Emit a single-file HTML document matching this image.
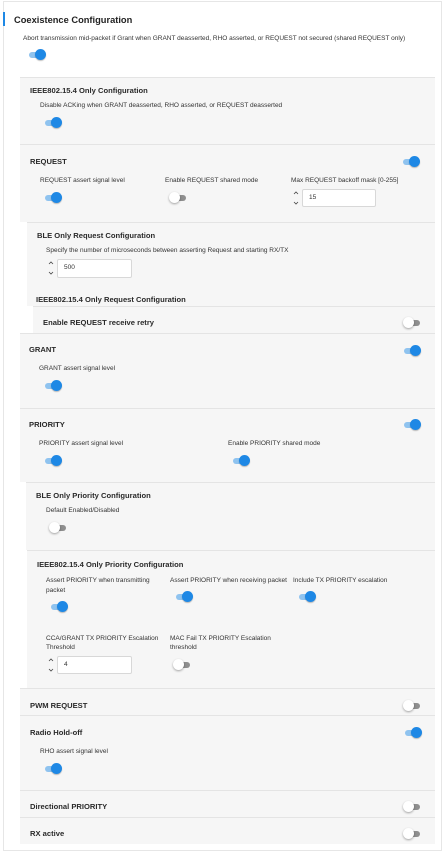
<!DOCTYPE html>
<html><head><meta charset="utf-8"><style>
*{margin:0;padding:0;box-sizing:border-box}
body{width:448px;height:848px;background:#fff;font-family:"Liberation Sans",Arial,sans-serif;color:#222;position:relative;overflow:hidden}
.a{position:absolute}
.card{left:3px;top:1px;width:439px;height:850px;border:1px solid #e6e6e6;background:#fff}
.p{background:#f6f6f6;border-top:1px solid #e4e4e4}
.t{position:absolute;white-space:nowrap;line-height:10px}
.h{font-size:7.6px;font-weight:bold;color:#2a2a2a}
.l{font-size:6.5px;color:#333}
.on,.off{position:absolute;width:18px;height:12px}
.on::before{content:"";position:absolute;left:1px;top:3px;width:15px;height:6px;border-radius:3px;background:#8fc3ef}
.on::after{content:"";position:absolute;left:7px;top:0;width:11px;height:11px;border-radius:50%;background:#1e88e5;box-shadow:0 1px 1px rgba(0,0,0,.25)}
.off::before{content:"";position:absolute;left:3px;top:3px;width:14px;height:6px;border-radius:3px;background:#8f8f8f}
.off::after{content:"";position:absolute;left:0;top:0;width:11px;height:11px;border-radius:50%;background:#fff;box-shadow:0 1px 2px rgba(0,0,0,.35)}
.in{position:absolute;background:#fff;border:1px solid #d8d8d8;border-radius:2px;font-size:6.5px;line-height:16px;padding-left:6px;color:#333}
.ar{position:absolute;width:6px;height:18px}
</style></head><body>
<div class="a card"></div>
<div class="a" style="left:3px;top:12px;width:2px;height:14px;background:#1e88e5"></div>
<div class="t" style="left:14px;top:15px;font-size:9.3px;font-weight:bold;color:#222">Coexistence Configuration</div>
<div class="t l" style="left:23px;top:34px">Abort transmission mid-packet if Grant when GRANT deasserted, RHO asserted, or REQUEST not secured (shared REQUEST only)</div>
<div class="on" style="left:28px;top:49px"></div>

<div class="a p" style="left:20px;top:77px;width:415px;height:67px"></div>
<div class="t h" style="left:30px;top:86px">IEEE802.15.4 Only Configuration</div>
<div class="t l" style="left:40px;top:101px">Disable ACKing when GRANT deasserted, RHO asserted, or REQUEST deasserted</div>
<div class="on" style="left:44px;top:117px"></div>

<div class="a p" style="left:20px;top:144px;width:415px;height:78px"></div>
<div class="t h" style="left:30px;top:157px">REQUEST</div>
<div class="on" style="left:402px;top:156px"></div>
<div class="t l" style="left:40px;top:176px">REQUEST assert signal level</div>
<div class="t l" style="left:165px;top:176px">Enable REQUEST shared mode</div>
<div class="t l" style="left:291px;top:176px">Max REQUEST backoff mask [0-255]</div>
<div class="on" style="left:44px;top:192px"></div>
<div class="off" style="left:169px;top:192px"></div>
<svg class="ar" style="left:293px;top:189px" viewBox="0 0 6 18"><path d="M1 5 L3 3 L5 5 M1 13 L3 15 L5 13" fill="none" stroke="#444" stroke-width="0.8"/></svg>
<div class="in" style="left:302px;top:189px;width:74px;height:18px">15</div>

<div class="a p" style="left:27px;top:222px;width:408px;height:84px"></div>
<div class="t h" style="left:37px;top:231px">BLE Only Request Configuration</div>
<div class="t l" style="left:46px;top:246px">Specify the number of microseconds between asserting Request and starting RX/TX</div>
<svg class="ar" style="left:48px;top:259px" viewBox="0 0 6 18"><path d="M1 5 L3 3 L5 5 M1 13 L3 15 L5 13" fill="none" stroke="#444" stroke-width="0.8"/></svg>
<div class="in" style="left:57px;top:259px;width:75px;height:19px">500</div>
<div class="t h" style="left:36px;top:295px">IEEE802.15.4 Only Request Configuration</div>
<div class="a p" style="left:33px;top:306px;width:402px;height:27px"></div>
<div class="t h" style="left:43px;top:318px">Enable REQUEST receive retry</div>
<div class="off" style="left:403px;top:317px"></div>

<div class="a p" style="left:20px;top:333px;width:415px;height:75px"></div>
<div class="t h" style="left:29px;top:345px">GRANT</div>
<div class="on" style="left:403px;top:345px"></div>
<div class="t l" style="left:39px;top:364px">GRANT assert signal level</div>
<div class="on" style="left:44px;top:380px"></div>

<div class="a p" style="left:20px;top:408px;width:415px;height:74px"></div>
<div class="t h" style="left:29px;top:420px">PRIORITY</div>
<div class="on" style="left:403px;top:419px"></div>
<div class="t l" style="left:39px;top:439px">PRIORITY assert signal level</div>
<div class="t l" style="left:228px;top:439px">Enable PRIORITY shared mode</div>
<div class="on" style="left:44px;top:455px"></div>
<div class="on" style="left:232px;top:455px"></div>

<div class="a p" style="left:26px;top:482px;width:409px;height:68px"></div>
<div class="t h" style="left:36px;top:491px">BLE Only Priority Configuration</div>
<div class="t l" style="left:46px;top:506px">Default Enabled/Disabled</div>
<div class="off" style="left:49px;top:522px"></div>

<div class="a p" style="left:27px;top:550px;width:408px;height:138px"></div>
<div class="t h" style="left:37px;top:560px">IEEE802.15.4 Only Priority Configuration</div>
<div class="t l" style="left:46px;top:576px">Assert PRIORITY when transmitting</div>
<div class="t l" style="left:46px;top:586px">packet</div>
<div class="t l" style="left:170px;top:576px">Assert PRIORITY when receiving packet</div>
<div class="t l" style="left:293px;top:576px">Include TX PRIORITY escalation</div>
<div class="on" style="left:50px;top:601px"></div>
<div class="on" style="left:175px;top:591px"></div>
<div class="on" style="left:298px;top:591px"></div>
<div class="t l" style="left:46px;top:634px">CCA/GRANT TX PRIORITY Escalation</div>
<div class="t l" style="left:46px;top:643px">Threshold</div>
<div class="t l" style="left:170px;top:634px">MAC Fail TX PRIORITY Escalation</div>
<div class="t l" style="left:170px;top:643px">threshold</div>
<svg class="ar" style="left:48px;top:656px" viewBox="0 0 6 18"><path d="M1 5 L3 3 L5 5 M1 13 L3 15 L5 13" fill="none" stroke="#444" stroke-width="0.8"/></svg>
<div class="in" style="left:57px;top:656px;width:75px;height:18px">4</div>
<div class="off" style="left:173px;top:659px"></div>

<div class="a p" style="left:20px;top:688px;width:415px;height:27px"></div>
<div class="t h" style="left:30px;top:701px">PWM REQUEST</div>
<div class="off" style="left:403px;top:700px"></div>
<div class="a p" style="left:20px;top:715px;width:415px;height:75px"></div>
<div class="t h" style="left:30px;top:728px">Radio Hold-off</div>
<div class="on" style="left:404px;top:727px"></div>
<div class="t l" style="left:40px;top:747px">RHO assert signal level</div>
<div class="on" style="left:44px;top:763px"></div>
<div class="a p" style="left:20px;top:790px;width:415px;height:27px"></div>
<div class="t h" style="left:30px;top:802px">Directional PRIORITY</div>
<div class="off" style="left:403px;top:801px"></div>
<div class="a p" style="left:20px;top:817px;width:415px;height:27px"></div>
<div class="t h" style="left:30px;top:829px">RX active</div>
<div class="off" style="left:403px;top:828px"></div>
</body></html>
